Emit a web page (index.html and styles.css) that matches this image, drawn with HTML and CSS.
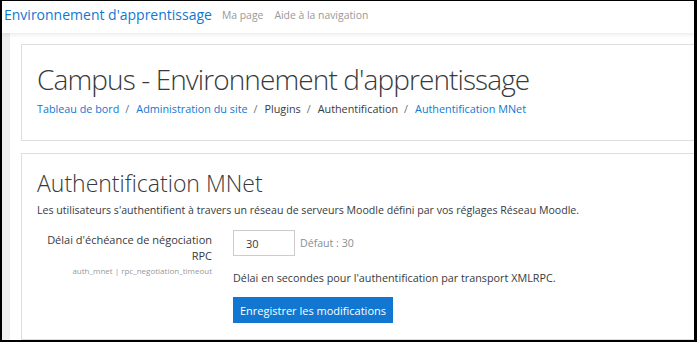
FILE: index.html
```html
<!DOCTYPE html>
<html lang="fr">
<head>
  <meta charset="UTF-8">
  <title>Authentification MNet</title>
  <link rel="stylesheet" href="styles.css">
</head>
<body>
  <div class="screen">
    <nav class="navbar">
      <a class="brand" href="#">Environnement d'apprentissage</a>
      <a class="nav-link" href="#">Ma page</a>
      <a class="nav-link" href="#">Aide à la navigation</a>
    </nav>

    <div class="page">
      <div class="drawer"></div>
      <div class="content">
        <header class="card page-header">
          <h1>Campus - Environnement d'apprentissage</h1>
          <ol class="breadcrumb">
            <li><a href="#">Tableau de bord</a></li>
            <li><a href="#">Administration du site</a></li>
            <li>Plugins</li>
            <li>Authentification</li>
            <li><a href="#">Authentification MNet</a></li>
          </ol>
        </header>

        <section class="card settings">
          <h2>Authentification MNet</h2>
          <p class="intro">Les utilisateurs s'authentifient à travers un réseau de serveurs Moodle défini par vos réglages Réseau Moodle.</p>

          <div class="form-row">
            <div class="form-label">
              <label for="timeout">Délai d'échéance de négociation RPC</label>
              <span class="setting-name">auth_mnet | rpc_negotiation_timeout</span>
            </div>
            <div class="form-field">
              <div class="field-line">
                <input type="text" id="timeout" class="text-input" value="30">
                <span class="default">Défaut : 30</span>
              </div>
              <p class="field-desc">Délai en secondes pour l'authentification par transport XMLRPC.</p>
              <button class="btn-primary">Enregistrer les modifications</button>
            </div>
          </div>
        </section>
      </div>
    </div>
  </div>
</body>
</html>
```

FILE: styles.css
```css
/* Black frame around the captured window */
html {
  background: #000000;
}

body {
  margin: 0;
  padding: 1px 3px 2px 2px;
  font-family: "Open Sans", "Noto Sans", sans-serif;
  color: #373a3c;
}

.screen {
  height: 339px;
  background: #ffffff;
  overflow: hidden;
  display: flex;
  flex-direction: column;
}

/* Top navigation bar */
.navbar {
  height: 32px;
  flex-shrink: 0;
  display: flex;
  align-items: center;
  gap: 11px;
  padding-left: 2px;
  background: #ffffff;
  box-shadow: 0 2px 4px rgba(0, 0, 0, 0.08);
  position: relative;
  z-index: 1;
}

.navbar a {
  text-decoration: none;
}

.brand {
  font-size: 14px;
  color: #1177d1;
  margin-right: -1px;
  margin-top: -6px;
}

.nav-link {
  font-size: 10.4px;
  color: #999999;
  margin-top: -5px;
}

/* Page body with the grey drawer strip */
.page {
  flex: 1;
  display: flex;
  min-height: 0;
}

.drawer {
  width: 8px;
  flex-shrink: 0;
  background: #f0f0f0;
}

.content {
  flex: 1;
  padding: 11px 0 0 11px;
  display: flex;
  flex-direction: column;
  gap: 12px;
  overflow: hidden;
}

.card {
  border: 1px solid #dedede;
  margin-right: -30px;
  padding: 0 15px;
}

/* Heading card */
.page-header {
  padding-top: 16px;
  box-sizing: border-box;
  height: 97px;
}

h1 {
  margin: 0;
  font-size: 28px;
  font-weight: 300;
  letter-spacing: -0.9px;
  line-height: 36px;
}

.breadcrumb {
  list-style: none;
  margin: 4px 0 0;
  padding: 0;
  display: flex;
  font-size: 10.8px;
}

.breadcrumb li + li::before {
  content: "/";
  color: #6a737b;
  padding: 0 7px 0 6px;
}

.breadcrumb a {
  color: #1177d1;
  text-decoration: none;
}

/* Settings card */
.settings {
  flex: 1;
  padding-top: 14px;
}

h2 {
  margin: 0;
  font-size: 23px;
  font-weight: 300;
  line-height: 30px;
}

.intro {
  margin: 5px 0 13px;
  font-size: 10.6px;
}

.form-row {
  display: flex;
  gap: 21px;
}

.form-label {
  width: 175px;
  text-align: right;
  font-size: 11px;
  line-height: 16px;
  padding-top: 2px;
}

.setting-name {
  display: block;
  font-size: 8px;
  color: #999999;
  line-height: 13px;
}

.field-line {
  display: flex;
  align-items: center;
  gap: 5px;
}

.text-input {
  width: 62px;
  height: 26px;
  box-sizing: border-box;
  border: 1px solid #cccccc;
  padding: 0 12px;
  font-family: inherit;
  font-size: 11px;
  color: #373a3c;
}

.default {
  font-size: 10.6px;
  color: #868e96;
}

.field-desc {
  margin: 14px 0 12px;
  font-size: 10.8px;
}

.btn-primary {
  width: 160px;
  height: 26px;
  border: none;
  background: #1177d1;
  color: #ffffff;
  font-family: inherit;
  font-size: 11px;
  padding: 0;
}
```
